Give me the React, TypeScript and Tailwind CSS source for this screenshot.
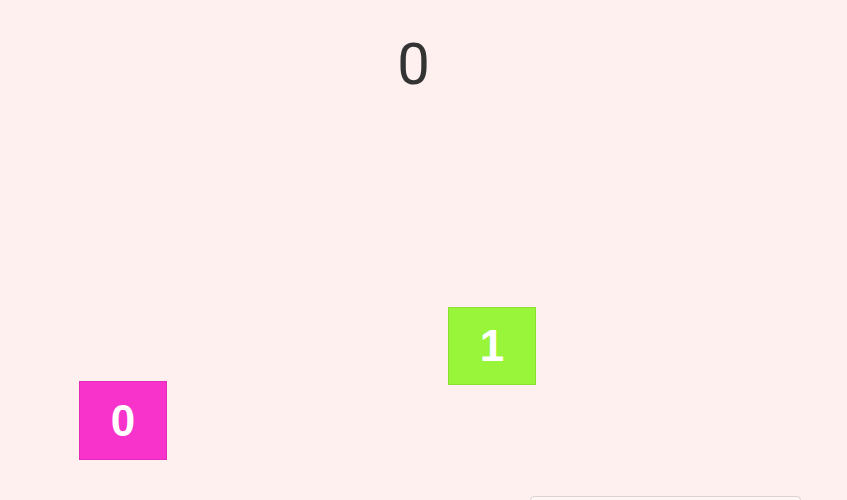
export default function App() {
  return (
    <div className="relative w-[847px] h-[500px] overflow-hidden bg-[#fff0f0]" style={{ fontFamily: '"Liberation Sans", Arial, sans-serif' }}>
      <div className="flex justify-center pt-[30px]">
        <span className="text-[58px] leading-[68px] text-[#333333] ml-[-20px]" style={{ fontFamily: 'Roboto, "Liberation Sans", sans-serif' }}>0</span>
      </div>
      <div className="absolute left-[448px] top-[307px] w-[88px] h-[78px] bg-[#99f53a] border border-[#8ee030] flex items-center justify-center text-white font-bold text-[44px]">1</div>
      <div className="absolute left-[79px] top-[381px] w-[88px] h-[79px] bg-[#f733cc] border border-[#e02cb8] flex items-center justify-center text-white font-bold text-[44px]">0</div>
      <div className="absolute left-[530px] top-[496px] w-[271px] h-[40px] bg-[#fff6f6] border border-[#e0d2d2] rounded-[4px]" />
    </div>
  );
}
